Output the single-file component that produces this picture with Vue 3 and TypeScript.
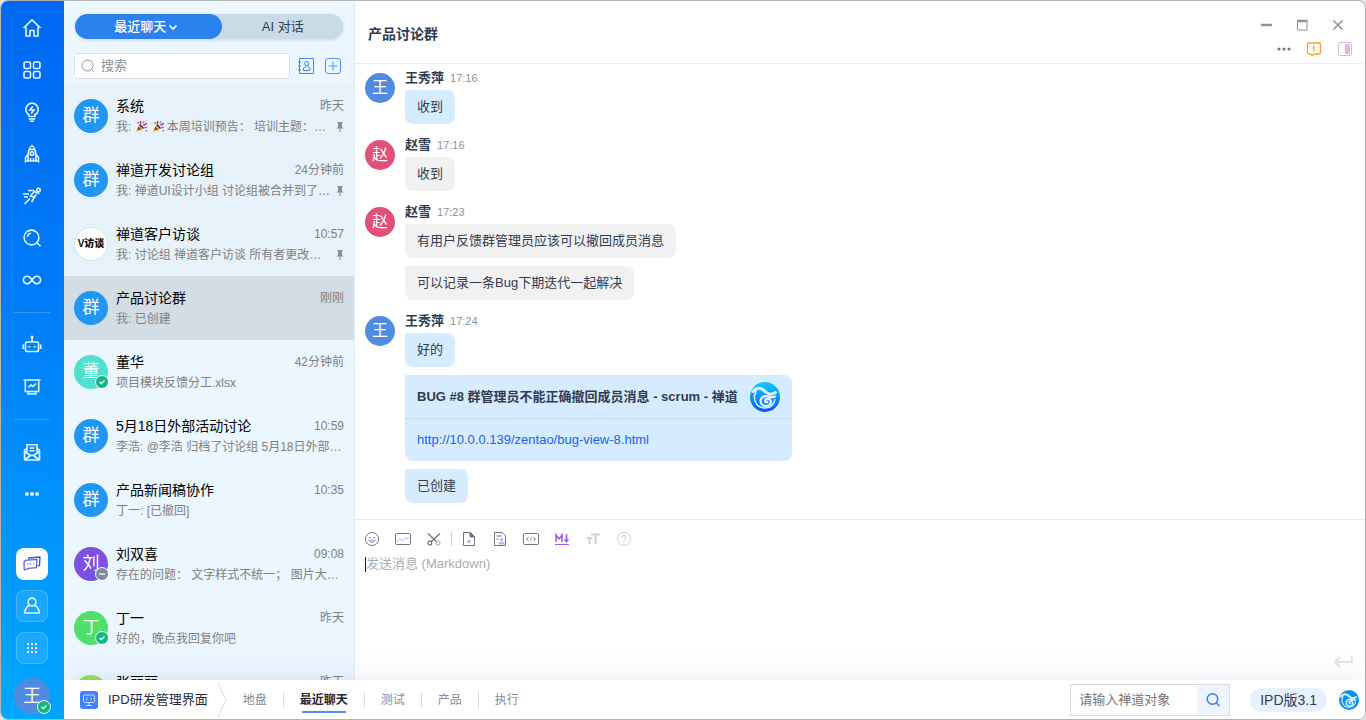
<script setup lang="ts">
import { ref } from 'vue'

interface Chat {
  name: string
  time: string
  text: string
  party?: boolean
  avatar: string
  color: string
  pinned?: boolean
  status?: 'online' | 'busy'
  logo?: boolean
}

interface Bubble {
  text?: string
  card?: { title: string; url: string }
}

interface Group {
  who: string
  time: string
  avatar: string
  mine: boolean
  bubbles: Bubble[]
}

/* Inner markup of the 20x20 line icons in the side bar */
const navIcons: Record<string, string> = {
  home: '<path d="M1.5 10 10 1.800 18.500 10M4 8.500V18h4v-5.500h4V18h4V8.500"/>',
  grid: '<rect x="2" y="2" width="6.500" height="6.500" rx="1.500"/><rect x="11.500" y="2" width="6.500" height="6.500" rx="1.500"/><rect x="2" y="11.500" width="6.500" height="6.500" rx="1.500"/><rect x="11.500" y="11.500" width="6.500" height="6.500" rx="1.500"/>',
  idea: '<path d="M7 14.500v-1.700A6.200 6.200 0 1 1 13 12.800v1.700zM6.800 17h6.400M8 19.200h4"/><path d="M10.800 4.500 8 8h4l-2.800 3.500" stroke-width="1.600"/>',
  rocket: '<path d="M10 1.500C6.500 4.500 6 8 6 12v5h8v-5c0-4-.5-7.500-4-10.500zM6 10.500l-2.500 3V18.500M14 10.500l2.500 3V18.500M3.500 17H6M14 17h2.500M8.500 14v3M11.500 14v3M7.500 5.500h5"/><circle cx="10" cy="9.500" r="1.800"/>',
  run: '<circle cx="16.500" cy="4" r="1.700"/><path d="M6 4.500h5.500L14 6.500l3.500 1M1 8h6M2 11h4M12 6 8.500 10l4 1.500L9.500 16M8 12.500 2.500 18M14.500 8.500l-3 3"/>',
  search: '<circle cx="9.500" cy="9.500" r="7.400"/><path d="m15 15 3.500 3M5.500 9a4 4 0 0 1 3.500-3.800"/>',
  loop: '<path d="M10 10C8 7 6.500 6.200 5.200 6.200a3.800 3.800 0 0 0 0 7.600C6.500 13.800 8 13 10 10s3.500-3.800 4.800-3.800a3.800 3.800 0 0 1 0 7.600C13.500 13.800 12 13 10 10z"/>',
  robot: '<rect x="3.500" y="7" width="13" height="9.500" rx="1.200"/><path d="M10 7V2.500M1.300 9.500v4.500M18.700 9.500v4.500"/><circle cx="10" cy="2" r=".7"/><path d="M7.300 11v1.500M12.700 11v1.500" stroke-width="2"/>',
  board: '<path d="M1.500 3h17M3.300 3v11.500h13.400V3M7 14.500l-1.500 3M13 14.500l1.500 3M6.500 17h7M6.500 10.500 9 8l2 1.500 3-3"/>',
  mail: '<path d="M5 10V2.800h10V10M5 6.500 2.500 8v10h15V8L15 6.500M2.500 9.500l6 4h3l6-4M3 17.500l5.500-4M17 17.500l-5.500-4M7.500 6h5M7.500 8.800h5"/>',
  more: '<g fill="currentColor" stroke="none"><circle cx="5" cy="10" r="2"/><circle cx="10" cy="10" r="2"/><circle cx="15" cy="10" r="2"/></g>'
}

const navGroups: { id: string; label: string }[][] = [
  [
    { id: 'home', label: '首页' },
    { id: 'grid', label: '应用' },
    { id: 'idea', label: '需求' },
    { id: 'rocket', label: '产品' },
    { id: 'run', label: '执行' },
    { id: 'search', label: '测试' },
    { id: 'loop', label: 'DevOps' }
  ],
  [
    { id: 'robot', label: 'AI' },
    { id: 'board', label: 'BI' }
  ],
  [
    { id: 'mail', label: '反馈' },
    { id: 'more', label: '更多' }
  ]
]

const chats: Chat[] = [
  { name: '系统', time: '昨天', text: '本周培训预告： 培训主题：…', party: true, avatar: '群', color: '#2196f3', pinned: true },
  { name: '禅道开发讨论组', time: '24分钟前', text: '我: 禅道UI设计小组 讨论组被合并到了…', avatar: '群', color: '#2196f3', pinned: true },
  { name: '禅道客户访谈', time: '10:57', text: '我: 讨论组 禅道客户访谈 所有者更改…', avatar: 'V访谈', color: '#ffffff', pinned: true, logo: true },
  { name: '产品讨论群', time: '刚刚', text: '我: 已创建', avatar: '群', color: '#2196f3' },
  { name: '董华', time: '42分钟前', text: '项目模块反馈分工.xlsx', avatar: '董', color: '#50e0d0', status: 'online' },
  { name: '5月18日外部活动讨论', time: '10:59', text: '李浩: @李浩 归档了讨论组 5月18日外部…', avatar: '群', color: '#2196f3' },
  { name: '产品新闻稿协作', time: '10:35', text: '丁一: [已撤回]', avatar: '群', color: '#2196f3' },
  { name: '刘双喜', time: '09:08', text: '存在的问题： 文字样式不统一； 图片大…', avatar: '刘', color: '#7c50e0', status: 'busy' },
  { name: '丁一', time: '昨天', text: '好的，晚点我回复你吧', avatar: '丁', color: '#50e06a', status: 'online' },
  { name: '张丽丽', time: '昨天', text: '收到', avatar: '张', color: '#9be050' }
]
const current = ref(3)

const groups: Group[] = [
  { who: '王秀萍', time: '17:16', avatar: '王', mine: true, bubbles: [{ text: '收到' }] },
  { who: '赵雪', time: '17:16', avatar: '赵', mine: false, bubbles: [{ text: '收到' }] },
  {
    who: '赵雪', time: '17:23', avatar: '赵', mine: false,
    bubbles: [{ text: '有用户反馈群管理员应该可以撤回成员消息' }, { text: '可以记录一条Bug下期迭代一起解决' }]
  },
  {
    who: '王秀萍', time: '17:24', avatar: '王', mine: true,
    bubbles: [
      { text: '好的' },
      { card: { title: 'BUG #8 群管理员不能正确撤回成员消息 - scrum - 禅道', url: 'http://10.0.0.139/zentao/bug-view-8.html' } },
      { text: '已创建' }
    ]
  }
]

const tabs = ['地盘', '最近聊天', '测试', '产品', '执行']
const activeTab = ref('最近聊天')
const keyword = ref('')
const draft = ref('')
const objectId = ref('')

/* Wave emblem shared by the link card and the bottom bar */
const wave =
  '<path d="M3 9.500C6.500 5 11.500 5.500 14.500 9c3 3.300 7.500 4 11 1.500" stroke-width="3"/>' +
  '<path d="M6 9.500c-3.500 6-1 16 8.500 16.500 6 .3 10-4 10.300-8.500" stroke-width="1.600"/>' +
  '<path d="M25 14.500c-3.500 2-6-.8-10-.3-4.500.6-6 6.300-2.300 8.900 4.300 2.700 9-.6 8-4.100-1-3-5.200-2.800-5.500-.3-.1 1.400 1 1.900 2 1.400" stroke-width="2.400"/>'
</script>

<template>
  <div class="window">
    <nav class="rail">
      <div v-for="(group, g) in navGroups" :key="g" class="rail-group">
        <button v-for="item in group" :key="item.id" class="rail-btn" :aria-label="item.label">
          <svg class="line" width="20" height="20" viewBox="0 0 20 20" v-html="navIcons[item.id]"></svg>
        </button>
      </div>
      <div class="rail-bottom">
        <button class="tile on" aria-label="聊天">
          <svg width="20" height="20" viewBox="0 0 20 20" fill="none" stroke-width="1.3" stroke-linejoin="round">
            <path d="M6.500 5.500 7 4l11-1-.5 8.500-2 .3" stroke="#2856e8" />
            <path d="M3.500 6.300 15 5.300l-.7 8.400-8 .6-3.300 1.700-.8-1L2 8z" stroke="#5b5ff0" />
            <path d="M5.500 10.200h1M8.200 10h1M11 9.800h1" stroke="#5b5ff0" />
          </svg>
        </button>
        <button class="tile" aria-label="联系人">
          <svg class="line" width="20" height="20" viewBox="0 0 20 20">
            <circle cx="10" cy="6" r="3.900" />
            <path d="M7.500 9.200C4.500 10.500 3 13 2.700 17h14.600c-.3-4-1.800-6.500-4.800-7.800" />
          </svg>
        </button>
        <button class="tile" aria-label="应用中心">
          <svg width="20" height="20" viewBox="0 0 20 20" fill="#fff">
            <path d="M5 5h2v2H5zM9 5h2v2H9zM13 5h2v2h-2zM5 9h2v2H5zM9 9h2v2H9zM13 9h2v2h-2zM5 13h2v2H5zM9 13h2v2H9zM13 13h2v2h-2z" />
          </svg>
        </button>
        <button class="me">
          王
          <span class="badge online">
            <svg width="8" height="8" viewBox="0 0 8 8"><path d="m1.500 4 1.700 1.700L6.500 2.500" /></svg>
          </span>
        </button>
      </div>
    </nav>

    <div class="main">
      <div class="content">
        <aside class="panel">
          <div class="panel-head">
            <div class="switch">
              <button class="switch-btn on">
                最近聊天
                <svg width="10" height="10" viewBox="0 0 10 10" fill="none" stroke="#fff" stroke-width="1.600"><path d="m1.500 3.500 3.500 3.500 3.500-3.500" /></svg>
              </button>
              <button class="switch-btn">AI 对话</button>
            </div>
            <div class="find-row">
              <label class="find">
                <svg width="14" height="14" viewBox="0 0 14 14" fill="none" stroke="#8a93a3"><circle cx="6.500" cy="6.500" r="5.500" /><path d="m10.500 10.500 2.500 2.500" /></svg>
                <input v-model="keyword" type="text" placeholder="搜索" aria-label="搜索" />
              </label>
              <button class="mini" aria-label="通讯录">
                <svg width="18" height="18" viewBox="0 0 18 18" fill="none" stroke="#3a8bf5">
                  <path d="M2.500 1.500h14v15h-14zM1 5h3M1 9h3M1 13h3" />
                  <circle cx="9.700" cy="6.500" r="2" /><path d="M8.500 8.500v1.300L6.500 11v2.500h6.500V11l-2-1.200V8.500" />
                </svg>
              </button>
              <button class="mini" aria-label="新建">
                <svg width="18" height="18" viewBox="0 0 18 18" fill="none" stroke="#4a95f7">
                  <rect x="1.500" y="1.500" width="15" height="15" rx="2.500" /><path d="M9 4.500v9M4.500 9h9" />
                </svg>
              </button>
            </div>
          </div>

          <ul class="chats">
            <li v-for="(chat, i) in chats" :key="chat.name">
              <button class="chat" :class="{ pinned: chat.pinned, on: i === current }" @click="current = i">
                <span class="face" :class="{ logo: chat.logo }" :style="{ backgroundColor: chat.color }">
                  {{ chat.avatar }}
                  <span v-if="chat.status" class="badge" :class="chat.status">
                    <svg width="8" height="8" viewBox="0 0 8 8">
                      <path :d="chat.status === 'online' ? 'm1.500 4 1.700 1.700L6.500 2.500' : 'M1 4h6'" />
                    </svg>
                  </span>
                </span>
                <span class="info">
                  <span class="row">
                    <span class="name">{{ chat.name }}</span>
                    <span class="time">{{ chat.time }}</span>
                  </span>
                  <span class="row">
                    <span class="text">
                      <template v-if="chat.party">
                        <span class="lead">我: </span>
                        <svg v-for="n in 2" :key="n" class="popper" width="13" height="13" viewBox="0 0 13 13">
                          <path d="M1 12 4 5l4 4z" fill="#f0b030" />
                          <path d="M2 10 3.500 6.500l3 3z" fill="#8a4a2a" />
                          <path d="M4 5 5.500 4 9 8 8 9z" fill="#4a3040" />
                          <path d="M5 4c1.500-1 0-2 1-3M8.500 5.500C9 4 11 5 11.500 3" stroke="#e0325a" stroke-width="1.600" fill="none" />
                          <path d="M9 8c1-1 2 0 3-1M8 3l1-1.500" stroke="#38a0e8" stroke-width="1.500" fill="none" />
                          <path d="M2.500 2h1.500v1.500H2.500zM10.500 10H12v1.300h-1.500z" fill="#e0325a" />
                        </svg>
                      </template>{{ chat.text }}
                    </span>
                    <svg v-if="chat.pinned" class="pin" width="8" height="12" viewBox="0 0 8 12" fill="#7c858f">
                      <path d="M1.500 1h5v1L6 2.500V6l1.500 1.500H4.500V11h-1V7.500H.5L2 6V2.500L1.500 2z" />
                    </svg>
                  </span>
                </span>
              </button>
            </li>
          </ul>
        </aside>

        <section class="room">
          <header class="room-head">
            <h1>产品讨论群</h1>
            <div class="controls">
              <div class="control-row">
                <button aria-label="最小化"><svg width="14" height="14" viewBox="0 0 14 14"><path d="M2 7h11" stroke="#8d919e" stroke-width="2.500" /></svg></button>
                <button aria-label="最大化"><svg width="14" height="14" viewBox="0 0 14 14" fill="none" stroke="#8d919e"><path d="M2.500 2.500h9.500v9.500H2.500z" /><path d="M2 3h10.500" stroke-width="2.500" /></svg></button>
                <button aria-label="关闭"><svg width="14" height="14" viewBox="0 0 14 14"><path d="m2.500 2.500 9 9m0-9-9 9" stroke="#8d919e" stroke-width="1.500" /></svg></button>
              </div>
              <div class="control-row tools">
                <button aria-label="更多"><svg width="14" height="14" viewBox="0 0 14 14" fill="#74758a"><circle cx="2" cy="7" r="1.600" /><circle cx="7" cy="7" r="1.600" /><circle cx="12" cy="7" r="1.600" /></svg></button>
                <button aria-label="历史消息"><svg width="16" height="16" viewBox="0 0 16 16" fill="none" stroke="#f5a623" stroke-width="1.300"><path d="M3 2h10q1.500 0 1.500 1.500v8q0 1.500-1.500 1.500H8.500L6 14.800 4.500 13H3q-1.500 0-1.500-1.500v-8Q1.500 2 3 2zM7.500 4.500v4l1.500 1.800" /></svg></button>
                <button aria-label="侧栏"><svg width="16" height="16" viewBox="0 0 16 16"><rect x="1.500" y="1.500" width="13" height="13" rx="1.500" fill="none" stroke="#dfb3dc" /><path d="M8 3h5v10H8z" fill="#e3b6de" /></svg></button>
              </div>
            </div>
          </header>

          <div class="messages">
            <article v-for="(group, g) in groups" :key="g" class="group" :class="{ mine: group.mine }">
              <span class="portrait">{{ group.avatar }}</span>
              <div class="stack">
                <div class="byline"><strong>{{ group.who }}</strong><time>{{ group.time }}</time></div>
                <div v-for="(b, n) in group.bubbles" :key="n" class="bubble" :class="{ card: b.card }">
                  <template v-if="b.card">
                    <div class="card-title">
                      <span>{{ b.card.title }}</span>
                      <svg width="30" height="30" viewBox="0 0 30 30">
                        <defs><linearGradient id="wave" x1="0" y1="0" x2="0" y2="1"><stop offset="0" stop-color="#10ccff" /><stop offset="1" stop-color="#0058ff" /></linearGradient></defs>
                        <circle cx="15" cy="15" r="15" fill="url(#wave)" />
                        <g fill="none" stroke="#dff3ff" stroke-linecap="round" v-html="wave"></g>
                      </svg>
                    </div>
                    <div class="card-body"><a :href="b.card.url">{{ b.card.url }}</a></div>
                  </template>
                  <template v-else>{{ b.text }}</template>
                </div>
              </div>
            </article>
          </div>

          <div class="composer">
            <div class="toolbar">
              <button aria-label="表情"><svg width="16" height="16" viewBox="0 0 16 16" fill="none" stroke="#71747c"><circle cx="8" cy="8" r="6.500" /><path d="M5 6.500h1.500M9.500 6.500H11" /><path d="M4.500 9h7c-.7 3.500-6.300 3.500-7 0z" fill="#d9b8ee" stroke="#b493d6" stroke-width=".6" /></svg></button>
              <button aria-label="图片"><svg width="16" height="16" viewBox="0 0 16 16" fill="none" stroke="#71747c"><rect x=".5" y="2.500" width="15" height="11" rx="1" /><path d="m2 11 3-3.500 2.500 2.500L11 6.500l1 1.500 2-1.500" stroke="#c9a4ea" /></svg></button>
              <button aria-label="截图"><svg width="16" height="16" viewBox="0 0 16 16" fill="none" stroke="#71747c" stroke-width="1.300"><path d="M2 2.500 11 11M14 2.500 5 11" /><circle cx="3.800" cy="12" r="1.900" /><circle cx="12" cy="12" r="1.900" stroke="#d0abec" /></svg></button>
              <i class="bar"></i>
              <button aria-label="文件"><svg width="16" height="16" viewBox="0 0 16 16" fill="none" stroke="#71747c"><path d="M2.500 1.500h7l4 4v9h-11z" /><path d="M9 1.500V6h4.500z" fill="#71747c" /><path d="M8 8.500v4M6 10.500h4" stroke="#c9a4ea" stroke-width="1.400" /></svg></button>
              <button aria-label="名片"><svg width="16" height="16" viewBox="0 0 16 16" fill="none" stroke="#71747c"><path d="M2.500 1.500h8l3 3v10h-11zM4.500 5h5M4.500 8h2" /><circle cx="9.500" cy="8.500" r="1.700" fill="#d3b0ed" stroke="none" /><path d="M6 13.500c.5-4 6.500-4 7 0z" fill="#d3b0ed" stroke="none" /></svg></button>
              <button aria-label="代码"><svg width="16" height="16" viewBox="0 0 16 16" fill="none" stroke="#71747c"><rect x=".5" y="2.500" width="15" height="11" rx="1" /><path d="M5.500 6.300 3.500 8l2 1.700M10.500 6.300l2 1.700-2 1.700" /><path d="M8.700 5.800 7.300 10.200" stroke="#c08be8" /></svg></button>
              <button aria-label="Markdown"><svg width="16" height="16" viewBox="0 0 16 16" fill="none" stroke="#a45cf0" stroke-width="1.600"><path d="M2 11V4l3 4 3-4v7M12.500 3v7M10.500 8.500l2 2 2-2" /><path d="M1 13.500h14" stroke-width="1" /></svg></button>
              <button aria-label="字号"><svg width="16" height="16" viewBox="0 0 16 16" fill="none" stroke="#d2d2d4" stroke-width="2"><path d="M6 3.500h9M10.500 3.500V13M1.500 7h6M4.500 7v6" /></svg></button>
              <button aria-label="帮助"><svg width="16" height="16" viewBox="0 0 16 16" fill="none" stroke="#cfcfd2"><circle cx="8" cy="8" r="6.500" /><path d="M6 6.500c0-2.500 4-2.500 4 0 0 1.500-2 1.500-2 3M8 10.800v1.200" stroke-width="1.200" /></svg></button>
            </div>
            <div class="writer">
              <textarea v-model="draft" placeholder="发送消息 (Markdown)" aria-label="发送消息"></textarea>
            </div>
            <button class="send" aria-label="发送"><svg width="20" height="14" viewBox="0 0 20 14" fill="none" stroke="#e2e3e6" stroke-width="2"><path d="M19 1.500V7H2M7 2 2 7l5 5" /></svg></button>
          </div>
        </section>
      </div>

      <footer class="dock">
        <a class="product" href="#">
          <svg width="18" height="18" viewBox="0 0 18 18"><rect width="18" height="18" rx="3" fill="#3d82fb" /><g fill="none" stroke="#c5dcff"><rect x="3.500" y="4" width="11" height="7.500" rx="1" /><path d="M9 11.500V14M6 14.500h6M7.500 6.300 6 7.700l1.500 1.400M10.500 6.300 12 7.700l-1.500 1.400" /></g></svg>
          <span>IPD研发管理界面</span>
        </a>
        <svg class="chevron" width="10" height="36" viewBox="0 0 10 36" fill="none" stroke="#d9dce0"><path d="m1 1 8 17-8 17" /></svg>
        <div class="tabs">
          <button v-for="t in tabs" :key="t" :class="{ on: t === activeTab }" @click="activeTab = t"><span>{{ t }}</span></button>
        </div>
        <form class="lookup" @submit.prevent>
          <input v-model="objectId" type="text" placeholder="请输入禅道对象" aria-label="请输入禅道对象" />
          <button aria-label="查找"><svg width="16" height="16" viewBox="0 0 16 16" fill="none" stroke="#3b78f5" stroke-width="1.500"><circle cx="7.500" cy="7" r="5.300" /><path d="m11.500 11 3 3" /></svg></button>
        </form>
        <span class="edition">IPD版3.1</span>
        <svg class="brand" width="20" height="20" viewBox="0 0 30 30">
          <circle cx="15" cy="15" r="15" fill="#0a90f5" />
          <g fill="none" stroke="#dff3ff" stroke-linecap="round" v-html="wave"></g>
        </svg>
      </footer>
    </div>
  </div>
</template>

<style>
body {
  margin: 0;
  background: #e4e4e4;
}
</style>

<style scoped>
.window,
.window * {
  box-sizing: border-box;
}
.window {
  display: flex;
  height: 100vh;
  overflow: hidden;
  border: 1px solid #b4b4b4;
  border-radius: 8px;
  background: #fff;
  color: #313c52;
  font: 13px/18px "Liberation Sans", "Noto Sans CJK SC", sans-serif;
}
button,
input,
textarea {
  margin: 0;
  padding: 0;
  border: 0;
  background: none;
  color: inherit;
  font: inherit;
}
button {
  cursor: pointer;
}
svg {
  display: block;
  flex: none;
}
.line {
  fill: none;
  stroke: currentColor;
  stroke-width: 1.6;
}

/* Side bar */
.rail {
  display: flex;
  flex: none;
  flex-direction: column;
  align-items: center;
  width: 63px;
  padding: 6px 1px 0 0;
  background: linear-gradient(192deg, #0068f2, #007cf8 40%, #00a8ff);
  color: #e8f5ff;
}
.rail-group {
  display: flex;
  flex-direction: column;
  width: 36px;
}
.rail-group + .rail-group {
  margin-top: 11px;
  padding-top: 11px;
  border-top: 1px solid rgba(255, 255, 255, 0.2);
}
.rail-btn {
  display: flex;
  align-items: center;
  justify-content: center;
  height: 42px;
}
.rail-bottom {
  display: flex;
  flex-direction: column;
  align-items: center;
  gap: 10px;
  margin-top: auto;
  padding-bottom: 5px;
}
.tile {
  display: flex;
  align-items: center;
  justify-content: center;
  width: 32px;
  height: 32px;
  border: 1px solid rgba(255, 255, 255, 0.2);
  border-radius: 8px;
  background: rgba(255, 255, 255, 0.1);
}
.tile.on {
  background: #fff;
}
.me {
  position: relative;
  width: 36px;
  height: 36px;
  margin-top: 4px;
  border-radius: 50%;
  background: #508be0;
  color: #fff;
  font-size: 18px;
}
.badge {
  position: absolute;
  right: -1px;
  bottom: 0;
  display: flex;
  align-items: center;
  justify-content: center;
  width: 14px;
  height: 14px;
  border: 1px solid #fff;
  border-radius: 50%;
  background: #11b981;
}
.badge.busy {
  background: #838a9d;
}
.badge path {
  fill: none;
  stroke: #fff;
  stroke-width: 1.3;
}

/* Frame */
.main {
  display: flex;
  flex: 1;
  flex-direction: column;
  min-width: 0;
}
.content {
  display: flex;
  flex: 1;
  min-height: 0;
}

/* Chat list */
.panel {
  display: flex;
  flex: none;
  flex-direction: column;
  width: 291px;
  border-right: 1px solid #e3eef8;
  background: #ebf6ff;
}
.panel-head {
  display: flex;
  flex: none;
  flex-direction: column;
  gap: 14px;
  height: 83px;
  padding: 13px 10px 0;
}
.switch {
  display: flex;
  height: 25px;
  margin: 0 1px;
  border-radius: 13px;
  background: #c9dbe7;
  box-shadow: 0 1px 3px rgba(60, 100, 140, 0.2);
}
.switch-btn {
  flex: 1;
  border-radius: 13px;
}
.switch-btn.on {
  display: flex;
  flex: none;
  align-items: center;
  justify-content: center;
  gap: 2px;
  width: 55%;
  padding-right: 5px;
  background: #2b82ee;
  color: #fff;
  font-weight: 500;
}
.find-row {
  display: flex;
  align-items: center;
  gap: 9px;
  padding-right: 2px;
}
.find {
  display: flex;
  flex: 1;
  align-items: center;
  gap: 6px;
  height: 26px;
  margin-right: -2px;
  padding: 0 6px;
  border: 1px solid #d8dfe6;
  border-radius: 4px;
  background: #fff;
}
.find input {
  flex: 1;
  min-width: 0;
  outline: 0;
}
.find input::placeholder {
  color: #8b929e;
}
.chats {
  flex: 1;
  min-height: 0;
  margin: 0;
  padding: 0;
  overflow: hidden;
  list-style: none;
}
.chat {
  display: flex;
  align-items: center;
  gap: 8px;
  width: 100%;
  height: 64px;
  padding: 0 10px;
  text-align: left;
}
.chat.pinned {
  background: #e6f1fa;
}
.chat.on {
  background: #d3dde6;
}
.face {
  position: relative;
  display: flex;
  flex: none;
  align-items: center;
  justify-content: center;
  width: 34px;
  height: 34px;
  border-radius: 50%;
  color: #fff;
  font-size: 17px;
}
.face.logo {
  border: 1px solid #c5eee4;
  color: #111;
  font-size: 10px;
  font-weight: 900;
}
.info {
  display: flex;
  flex: 1;
  flex-direction: column;
  gap: 3px;
  min-width: 0;
}
.row {
  display: flex;
  align-items: center;
  justify-content: space-between;
}
.name {
  color: #000;
  font-size: 14px;
}
.time,
.text {
  color: #808080;
  font-size: 12px;
  white-space: pre;
}
.text {
  display: flex;
  align-items: center;
}
.popper {
  margin-right: 4px;
}
.popper + .popper {
  margin-right: 2px;
}
.pin {
  opacity: 0.9;
}

/* Conversation */
.room {
  display: flex;
  flex: 1;
  flex-direction: column;
  min-width: 0;
}
.room-head {
  display: flex;
  flex: none;
  align-items: center;
  justify-content: space-between;
  height: 63px;
  margin-right: 2px;
  padding: 0 10px 0 13px;
  border-bottom: 1px solid #ececef;
}
.room-head h1 {
  margin: 0;
  padding-top: 4px;
  font-size: 14px;
  line-height: 20px;
}
.controls {
  display: flex;
  flex-direction: column;
  align-items: flex-end;
  gap: 9px;
  padding-top: 10px;
}
.control-row {
  display: flex;
  align-items: center;
  gap: 22px;
  padding-right: 8px;
}
.control-row.tools {
  gap: 15px;
  padding-right: 0;
}
.messages {
  display: flex;
  flex: 1;
  flex-direction: column;
  gap: 12px;
  min-height: 0;
  padding: 5px 10px;
  overflow: hidden;
}
.group {
  display: flex;
  flex: none;
  align-items: flex-start;
  gap: 10px;
}
.portrait {
  display: flex;
  align-items: center;
  justify-content: center;
  width: 30px;
  height: 30px;
  margin-top: 4px;
  border-radius: 50%;
  background: #e05078;
  color: #fff;
  font-size: 16px;
}
.mine .portrait {
  background: #508be0;
}
.stack {
  display: flex;
  flex-direction: column;
  align-items: flex-start;
  gap: 8px;
}
.byline {
  display: flex;
  align-items: center;
  gap: 6px;
  margin-bottom: -5px;
}
.byline time {
  color: #8b8f99;
  font-size: 11px;
}
.bubble {
  padding: 8px 12px;
  border-radius: 2px 8px 8px 8px;
  background: #f1f1f1;
}
.mine .bubble {
  background: #d5ebff;
}
.bubble.card {
  padding: 0;
}
.card-title {
  display: flex;
  align-items: center;
  gap: 12px;
  padding: 7px 12px 6px;
  border-bottom: 1px solid #c3d9ef;
  font-weight: 700;
}
.card-body {
  padding: 12px;
}
.card-body a {
  color: #1a62f0;
  text-decoration: none;
}

/* Composer */
.composer {
  display: flex;
  flex: none;
  flex-direction: column;
  height: 161px;
  padding: 11px 10px;
  border-top: 1px solid #e3edf5;
}
.toolbar {
  display: flex;
  align-items: center;
  gap: 15px;
  margin-left: -1px;
}
.bar {
  width: 1px;
  height: 14px;
  margin: 0 -6px 0 -6px;
  background: #d9c0ea;
}
.writer {
  display: flex;
  flex: 1;
  align-items: flex-start;
  padding-top: 8px;
}
.writer::before {
  width: 1px;
  height: 15px;
  margin-top: 2px;
  background: #222;
  content: "";
}
.writer textarea {
  flex: 1;
  height: 60px;
  outline: 0;
  resize: none;
}
.writer textarea::placeholder {
  color: #a7adb6;
}
.send {
  align-self: flex-end;
  margin-right: 2px;
}

/* Bottom bar */
.dock {
  position: relative;
  display: flex;
  flex: none;
  align-items: center;
  height: 39px;
  padding: 0 6px 0 16px;
  background: #fff;
  box-shadow: 0 0 30px rgba(50, 80, 130, 0.12);
}
.product {
  display: flex;
  align-items: center;
  gap: 10px;
  color: #1f2b40;
  text-decoration: none;
}
.chevron {
  margin: 0 0 0 9px;
}
.tabs {
  display: flex;
  flex: 1;
  color: #838a9d;
  font-size: 12px;
}
.tabs button {
  display: flex;
  align-items: center;
  height: 16px;
  padding: 0 16px;
}
.tabs button + button {
  border-left: 1px solid #d8dbe0;
}
.tabs .on {
  position: relative;
  color: #1f2533;
  font-weight: 700;
}
.tabs .on::after {
  position: absolute;
  right: 18px;
  bottom: -5px;
  left: 18px;
  height: 2px;
  background: #4f8df9;
  content: "";
}
.lookup {
  display: flex;
  width: 160px;
  height: 32px;
  border: 1px solid #d8dbe0;
}
.lookup input {
  flex: 1;
  min-width: 0;
  padding: 0 8px;
  outline: 0;
}
.lookup input::placeholder {
  color: #757575;
}
.lookup button {
  display: flex;
  align-items: center;
  justify-content: center;
  width: 32px;
  background: #eef4ff;
}
.edition {
  margin: 0 12px 0 20px;
  padding: 3px 10px;
  border-radius: 12px;
  background: #e6f1ff;
  font-size: 14px;
}
</style>
